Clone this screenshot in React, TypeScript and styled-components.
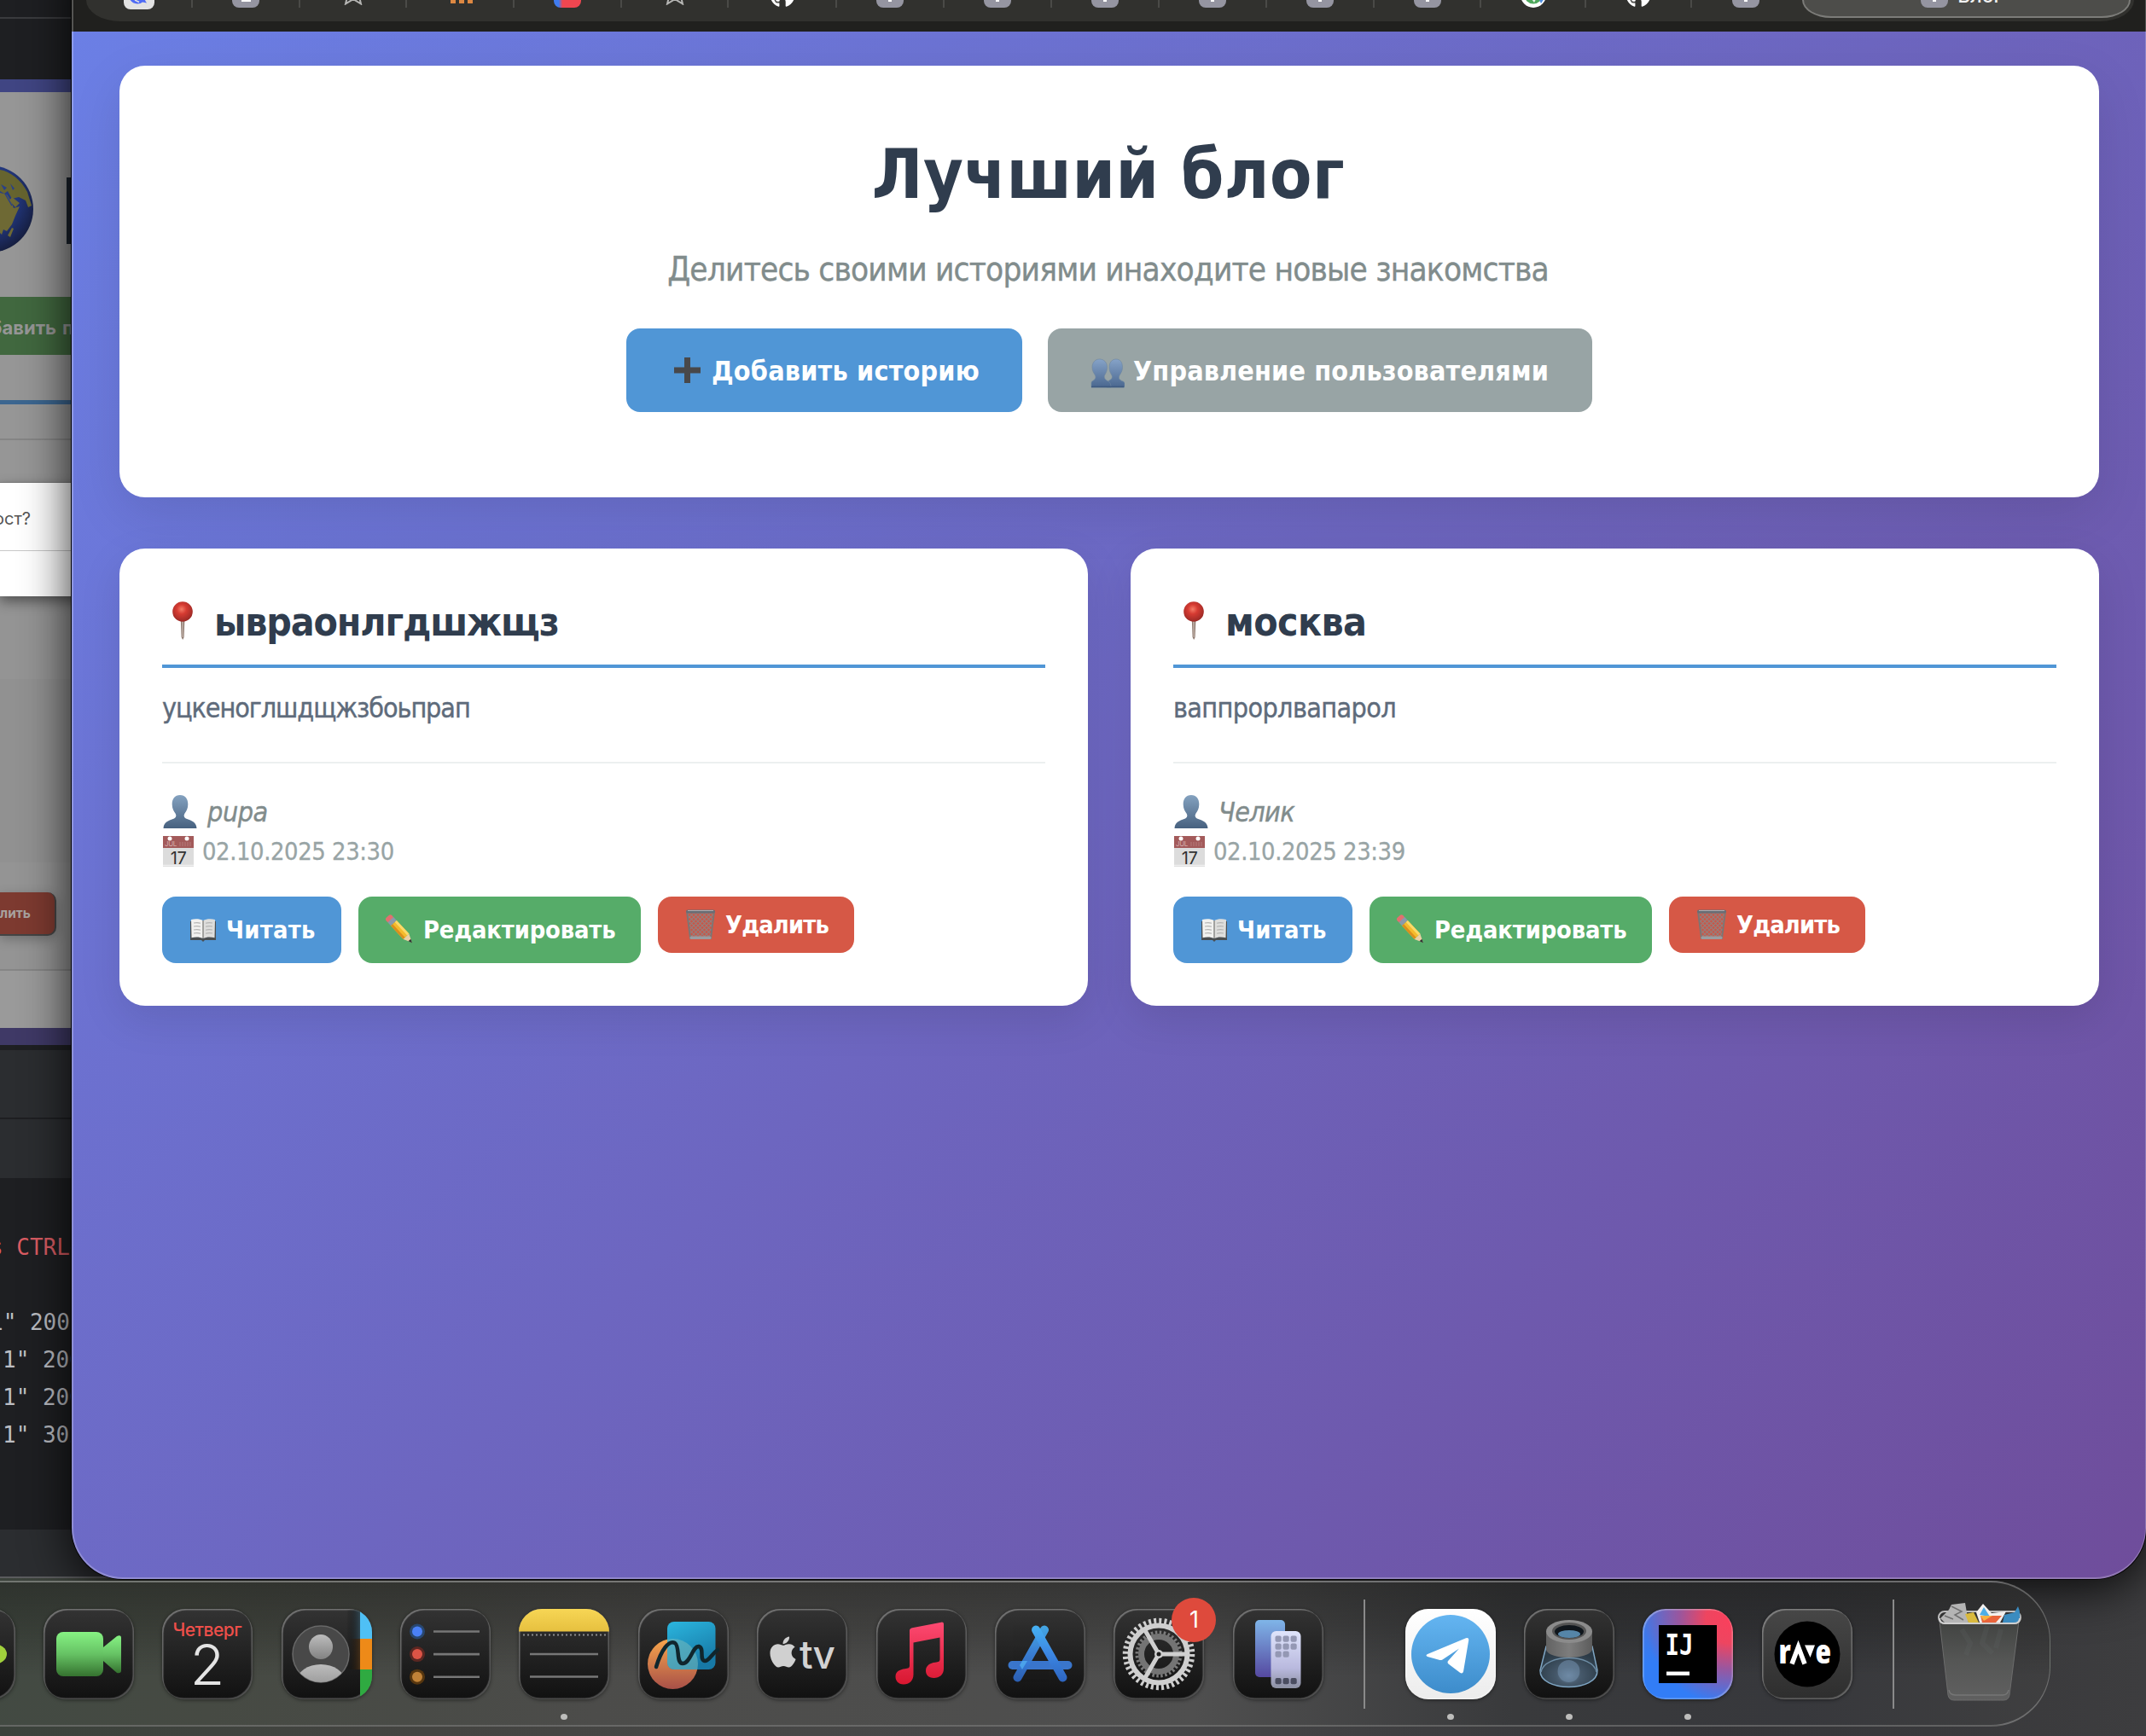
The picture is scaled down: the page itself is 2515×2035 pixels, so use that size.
import React from "react";
import styled, { createGlobalStyle } from "styled-components";
import { FaApple, FaGithub } from "react-icons/fa";

const GlobalStyle = createGlobalStyle`
  * { box-sizing: border-box; }
  html, body { margin: 0; padding: 0; overflow: hidden; background: #2a2a2b; }
  body { font-family: "DejaVu Sans Condensed", "DejaVu Sans", sans-serif; font-stretch: condensed; }
  svg { display: block; flex: none; }
`;

/* ---------- desktop ---------- */

const Desktop = styled.div`
  position: relative;
  width: 2515px;
  height: 2035px;
  overflow: hidden;
  background: linear-gradient(90deg, #3b423b 0%, #444441 20%, #49494a 50%, #353538 80%, #3d3d3f 100%);
`;

const BackWindow = styled.div`
  position: absolute;
  left: 0;
  top: 0;
  width: 140px;
  height: 1850px;
  display: flex;
  flex-direction: column;
  background: #1e1f22;
  border-bottom: 2px solid #5a5b5d;
  overflow: hidden;
`;

const Band = styled.div<{ $h: number; $bg: string; $line?: string }>`
  flex: none;
  height: ${(p) => p.$h}px;
  background: ${(p) => p.$bg};
  border-bottom: ${(p) => (p.$line ? `2px solid ${p.$line}` : "none")};
`;

const GlobeBand = styled(Band)`
  display: flex;
  align-items: flex-start;
  padding-top: 86px;
`;

const LetterEdge = styled.div`
  width: 30px;
  height: 78px;
  margin: 14px 0 0 39px;
  background: #1c242e;
`;

const GreenButton = styled(Band)`
  display: flex;
  align-items: center;
  gap: 7px;
  padding-top: 3px;
  color: #969696;
  font: 700 22px/30px Inter, "Open Sans", sans-serif;
`;

const EndAligned = styled.span<{ $w: number }>`
  flex: none;
  display: flex;
  justify-content: flex-end;
  width: ${(p) => p.$w}px;
  white-space: nowrap;
`;

const Dialog = styled.div`
  flex: none;
  position: relative;
  height: 134px;
  background: #fff;
  border-top: 1px solid #777;
  box-shadow: 0 6px 14px rgba(0, 0, 0, 0.45);
`;

const DialogText = styled.div`
  height: 80px;
  padding-top: 28px;
  border-bottom: 1px solid #c8c8c8;
  color: #555;
  font: 400 20px/28px Inter, "Open Sans", sans-serif;
`;

const DeleteBand = styled(Band)`
  padding-top: 35px;
`;

const DimDelete = styled.div`
  display: flex;
  align-items: center;
  width: 66px;
  height: 51px;
  border-radius: 0 10px 10px 0;
  background: #7d3a30;
  border-right: 2px solid #444;
  border-bottom: 2px solid #444;
  color: #a8a29f;
  box-shadow: 0 4px 14px rgba(0, 0, 0, 0.25);
  font: 700 15.5px/20px Inter, "Open Sans", sans-serif;
`;

const Terminal = styled.div`
  flex: none;
  height: 412px;
  padding-top: 59px;
  background: #1e1f22;
`;

const TermLine = styled.div<{ $red?: boolean; $shift: number; $gap?: number }>`
  height: 44px;
  margin-bottom: ${(p) => p.$gap ?? 0}px;
  padding-left: 4px;
  text-indent: ${(p) => p.$shift}px;
  color: ${(p) => (p.$red ? "#db5c63" : "#bcbec4")};
  font: 400 26px/44px "DejaVu Sans Mono", monospace;
  font-stretch: normal;
  white-space: pre;
`;

/* ---------- browser window ---------- */

const Browser = styled.div`
  position: absolute;
  left: 84px;
  top: -90px;
  width: 2431px;
  height: 1941px;
  padding-top: 90px;
  display: flex;
  flex-direction: column;
  overflow: hidden;
  border-radius: 0 0 60px 60px;
  background: #20201e;
  box-shadow: 0 0 0 1px #050505;
  &::after {
    content: "";
    position: absolute;
    inset: 0;
    border: 2px solid rgba(255, 255, 255, 0.24);
    border-right-width: 1px;
    border-radius: 0 0 60px 60px;
  }
`;

const WindowShade = styled.div`
  position: absolute;
  left: 84px;
  top: -100px;
  width: 2431px;
  height: 1951px;
  border-radius: 60px;
  box-shadow: 0 10px 56px rgba(0, 0, 0, 0.85);
`;

const TabStrip = styled.div`
  flex: none;
  display: flex;
  height: 25px;
  margin: 0 14px 12px 17px;
  padding-right: 4px;
  background: #31312e;
  border-radius: 0 0 40px 40px / 0 0 25px 25px;
`;

const Tab = styled.div<{ $w: number; $last?: boolean }>`
  display: flex;
  justify-content: center;
  flex: none;
  width: ${(p) => p.$w}px;
  height: 9px;
  border-right: ${(p) => (p.$last ? "none" : "2px solid #4a4a47")};
`;

const ActiveTab = styled.div`
  flex: 1;
  display: flex;
  justify-content: center;
  gap: 11px;
  height: 21px;
  margin-left: 3px;
  padding-right: 11px;
  background: #4d4d4a;
  border: 2px solid #7c7c79;
  border-top: none;
  border-radius: 0 0 34px 34px / 0 0 21px 21px;
`;

const ActiveTitle = styled.span`
  color: #f2f2f2;
  margin-top: -20px;
  height: 32px;
  font: 500 23px/30px Inter, "Open Sans", sans-serif;
`;

const Favicon = styled.div<{ $bg: string; $w?: number; $h?: number }>`
  display: flex;
  justify-content: center;
  width: ${(p) => p.$w ?? 32}px;
  height: ${(p) => p.$h ?? 9}px;
  border-radius: 0 0 8px 8px;
  background: ${(p) => p.$bg};
  overflow: hidden;
`;

const Notch = styled.div<{ $w: number; $h?: number }>`
  width: ${(p) => p.$w}px;
  height: ${(p) => p.$h ?? 2}px;
  background: #fff;
`;

const RoundIcon = styled.div`
  width: 30px;
  height: 30px;
  margin-top: -21px;
`;

/* ---------- page ---------- */

const Page = styled.main`
  flex: 1;
  padding: 40px 55px 0 56px;
  background: linear-gradient(135deg, #6b7fe5 0%, #6f4d9b 100%);
`;

const Hero = styled.header`
  display: flex;
  flex-direction: column;
  align-items: center;
  height: 506px;
  margin-bottom: 60px;
  padding-top: 78px;
  border-radius: 30px;
  background: #fff;
  box-shadow: 0 20px 60px rgba(0, 0, 0, 0.1);
`;

const Title = styled.h1`
  margin: 0;
  padding-right: 2px;
  color: #303d4e;
  font-size: 80px;
  font-weight: 700;
  line-height: 100px;
  letter-spacing: 0.55px;
`;

const Subtitle = styled.p`
  margin: 31px 0 39px;
  padding-right: 3px;
  color: #818c8c;
  font-size: 38.4px;
  line-height: 60px;
  letter-spacing: -0.81px;
  -webkit-text-stroke: 0.4px currentColor;
`;

const Row = styled.div<{ $gap: number }>`
  display: flex;
  align-items: flex-start;
  gap: ${(p) => p.$gap}px;
`;

const Button = styled.button<{ $bg: string; $w: number; $h: number; $pad: number; $size: number; $track?: number }>`
  display: flex;
  align-items: center;
  gap: ${(p) => (p.$size > 30 ? 10 : 9)}px;
  width: ${(p) => p.$w}px;
  height: ${(p) => p.$h}px;
  margin: 0;
  padding: ${(p) => (p.$size > 30 ? 2 : 0)}px 0 0 ${(p) => p.$pad}px;
  border: none;
  border-radius: 16px;
  background: ${(p) => p.$bg};
  color: #fff;
  font-family: inherit;
  font-stretch: condensed;
  font-size: ${(p) => p.$size}px;
  font-weight: 700;
  letter-spacing: ${(p) => p.$track ?? 0}px;
  white-space: nowrap;
`;

const Grid = styled.section`
  display: grid;
  grid-template-columns: 1fr 1fr;
  gap: 50px;
`;

const Card = styled.article`
  height: 536px;
  padding: 50px;
  border-radius: 30px;
  background: #fff;
  box-shadow: 0 16px 50px rgba(0, 0, 0, 0.1);
`;

const PostTitle = styled.h2<{ $track: number }>`
  display: flex;
  align-items: center;
  gap: 13px;
  height: 90px;
  margin: 0;
  padding-bottom: 14px;
  border-bottom: 4px solid #5096d6;
  color: #303d4e;
  font-size: 46px;
  font-weight: 700;
  letter-spacing: ${(p) => p.$track}px;
`;

const PostText = styled.p<{ $track: number }>`
  height: 112px;
  margin: 0 0 35px;
  padding-top: 22px;
  border-bottom: 2px solid #ecf0f0;
  color: #5e6b7b;
  font-size: 32px;
  line-height: 50px;
  letter-spacing: ${(p) => p.$track}px;
  -webkit-text-stroke: 0.4px currentColor;
`;

const Author = styled.div<{ $track: number }>`
  display: flex;
  align-items: center;
  gap: 11px;
  height: 44px;
  color: #818c8c;
  font-size: 32px;
  font-style: italic;
  line-height: 42px;
  letter-spacing: ${(p) => p.$track}px;
  -webkit-text-stroke: 0.4px currentColor;
`;

const DateRow = styled.div`
  display: flex;
  align-items: center;
  gap: 9px;
  height: 46px;
  margin: 1px 0 30px;
  color: #98a4a5;
  font-size: 28.8px;
  line-height: 46px;
  letter-spacing: -0.4px;
  -webkit-text-stroke: 0.3px currentColor;
`;

/* ---------- dock ---------- */

const DockArea = styled.div`
  position: absolute;
  left: -110px;
  top: 1853px;
  display: flex;
  gap: 33.4px;
  width: 2513px;
  height: 171px;
  padding: 31px 0 0 19.5px;
  border: 2px solid rgba(190, 190, 190, 0.38);
  border-right-width: 1.5px;
  border-radius: 70px;
  background: linear-gradient(180deg, rgba(20, 20, 18, 0.38) 0%, rgba(20, 20, 18, 0.2) 30%, rgba(255, 255, 255, 0.02) 65%),
    linear-gradient(90deg, #3d463e 0%, #42463f 14%, #484846 32%, #4b4b4b 60%, #353638 75%, #333438 88%, #3b3b3c 100%);
`;

const Slot = styled.div`
  position: relative;
  flex: none;
  display: flex;
  flex-direction: column;
  align-items: center;
  width: 106px;
  height: 130px;
`;

const Tile = styled.div<{ $bg?: string }>`
  width: 106px;
  height: 106px;
  flex: none;
  overflow: hidden;
  border-radius: 27px;
  background: ${(p) => p.$bg ?? "linear-gradient(180deg, #333333, #111111)"};
  box-shadow: inset 1.5px 1.5px 1px rgba(255, 255, 255, 0.32), inset -1.5px -1.5px 1px rgba(255, 255, 255, 0.26),
    0 1px 4px rgba(0, 0, 0, 0.45);
`;

const Dot = styled.i`
  width: 8px;
  height: 8px;
  margin-top: 17px;
  border-radius: 50%;
  background: #bdbdbb;
`;

const Divider = styled.div<{ $l: number; $r: number }>`
  flex: none;
  width: 2px;
  height: 128px;
  margin: -11px ${(p) => p.$r}px 0 ${(p) => p.$l}px;
  background: #8a8a8a;
`;

const Badge = styled.span`
  position: absolute;
  right: -14px;
  top: -13px;
  width: 52px;
  height: 52px;
  border-radius: 50%;
  background: #de4a3c;
  color: #fff;
  text-align: center;
  font: 400 27px/52px Inter, "Open Sans", sans-serif;
`;

/* ---------- emoji drawings ---------- */

const Plus = () => (
  <svg width="40" height="40" viewBox="0 0 40 40">
    <path d="M18 4h7v11.500h12v7H25V34h-7V22.500H6v-7h12z" fill="#48484a" />
  </svg>
);

const bust = "M20 1c-6 0-9.500 4.500-9.300 11 .1 5 2 8 3.800 10.500 1.500 2.500 1 5-2 6.300C7 31 1 32 .5 40h39c-.5-8-6.500-9-12-11.200-3-1.300-3.500-3.800-2-6.300C27.300 20 29.200 17 29.300 12 29.500 5.500 26 1 20 1z";

const Person = () => (
  <svg width="42" height="42" viewBox="0 0 42 42">
    <defs>
      <linearGradient id="bust" x1="0" y1="0" x2="0" y2="1">
        <stop offset="0" stopColor="#84a2c0" />
        <stop offset="1" stopColor="#47617f" />
      </linearGradient>
    </defs>
    <path d={bust} fill="url(#bust)" transform="translate(1 0)" />
  </svg>
);

const People = () => (
  <svg width="40" height="40" viewBox="0 -2 40 40">
    <defs>
      <linearGradient id="people" x1="0" y1="0" x2="0" y2="1">
        <stop offset="0" stopColor="#86a3c8" />
        <stop offset="1" stopColor="#4a678f" />
      </linearGradient>
    </defs>
    <g fill="url(#people)" stroke="#6d86a0" strokeWidth=".6">
      <path d="M30 4c-5 0-8 4-8 9.500 0 4.500 1.500 7 3 9.500 1 2.500 0 4.500-3 6-2 1-3 3-3 8h21v-5c-.500-2-3-2-5-3.500-2-1.500-2-3-1-5.500 1.500-2.500 3.500-5 3.500-9.500C37.500 8 35 4 30 4z" />
      <path d="M10.500 4c-5 0-8.500 4-8.500 9.500 0 4.500 2 7 3.500 9.500 1 2.500.5 4-1.500 5.500S1 30 1 32v5h23c0-4-1-6-4-7.500-3-1.500-4.500-4-3.500-6.500 1.500-2.500 3-5 3-9.500C19.500 8 16 4 10.500 4z" />
    </g>
    <path d="M1 36.500h38" stroke="#3f5a80" strokeWidth="1.500" />
  </svg>
);

const Pin = () => (
  <svg width="48" height="48" viewBox="1 0 48 48">
    <defs>
      <radialGradient id="pin" cx=".45" cy=".38" r=".6">
        <stop offset="0" stopColor="#f47b66" />
        <stop offset=".4" stopColor="#d63b32" />
        <stop offset="1" stopColor="#9d2a26" />
      </radialGradient>
    </defs>
    <path d="M22.800 21h4.600l-.8 21-1.500 3-1.500-3z" fill="#8f7a70" />
    <path d="M24.300 23h1.300v19h-1z" fill="#cdbfb6" />
    <circle cx="25" cy="12" r="11.800" fill="url(#pin)" />
  </svg>
);

const CalendarEmoji = () => (
  <svg width="38" height="38" viewBox="0 0 38 38">
    <path d="M1 1h36v36H1z" fill="#dcdcdc" />
    <path d="M1 1h36v14H1z" fill="#a35a5a" />
    <circle cx="9" cy="4" r="2.500" fill="#fff" />
    <circle cx="29" cy="4" r="2.500" fill="#fff" />
    <text x="3" y="13" fontSize="8" fill="#d3aaaa" fontFamily="Inter, sans-serif" strokeWidth="0">JUL</text>
    <path d="M21 8v5m3-5v5m3-5v5m3-5v5m3-5v5" stroke="#b57c7c" strokeWidth="1" />
    <text x="19" y="33.500" fontSize="20" textAnchor="middle" fill="#333" fontFamily="Inter, sans-serif" letterSpacing="-.5" strokeWidth="0">17</text>
    <path d="M1 35.500h36" stroke="#efefef" strokeWidth="1.500" />
  </svg>
);

const Book = () => (
  <svg width="35" height="36" viewBox="1 0 35 36">
    <path d="M3 8h30v22H20l-2 2-2-2H3z" fill="#4a4e50" />
    <path d="M4 6c5-1.500 10-1 14 1v21c-4-2-9-2-13.500-.8z" fill="#f1f1ef" />
    <path d="M32 6c-5-1.500-10-1-14 1v21c4-2 9-2 13.500-.8z" fill="#dededc" />
    <path d="M7 10c3-.6 6-.4 8 .3M7 14c3-.6 6-.4 8 .3M7 18c3-.6 6-.4 8 .3M7 22c3-.6 6-.4 8 .3M29 10c-3-.6-6-.4-8 .3M29 14c-3-.6-6-.4-8 .3M29 18c-3-.6-6-.4-8 .3M29 22c-3-.6-6-.4-8 .3" stroke="#b4b4b2" strokeWidth="1.200" fill="none" />
    <path d="M18 7v21" stroke="#8b8b89" strokeWidth="1.500" />
  </svg>
);

const Pencil = () => (
  <svg width="36" height="36" viewBox="0 0 36 36">
    <g transform="translate(1 0) rotate(47 3 3) scale(.97)">
      <rect x="2" y="-1.500" width="7" height="9.500" rx="3" fill="#e2706f" />
      <rect x="7.500" y="-1.500" width="5.500" height="9.500" fill="#8a99ab" />
      <rect x="13" y="-1.500" width="22" height="9.500" fill="#f5bb2c" />
      <rect x="13" y="-1.500" width="22" height="3" fill="#fbd96a" />
      <rect x="13" y="5" width="22" height="3" fill="#d98f1e" />
      <path d="M35-1.500 45 3.250 35 8z" fill="#ecd0a4" />
      <path d="M41 1.200 45.500 3.250 41 5.300z" fill="#333" />
    </g>
  </svg>
);

const Basket = () => (
  <svg width="37" height="38" viewBox="1 0 37 38">
    <defs>
      <pattern id="mesh" width="5" height="5" patternUnits="userSpaceOnUse">
        <path d="M0 0l5 5M5 0 0 5" stroke="#94807d" strokeWidth="1.100" />
      </pattern>
    </defs>
    <path d="M2 4h32l-4 31H6z" fill="#c95647" />
    <path d="M2 4h32l-4 31H6z" fill="url(#mesh)" stroke="#7a7675" strokeWidth="1.800" />
    <rect x="1" y="1.500" width="34" height="4" rx="2" fill="#686d74" />
    <path d="M3 2.500h30" stroke="#a9adb2" strokeWidth="1" />
    <rect x="5.500" y="32.500" width="25" height="3.500" rx="1.500" fill="#9a9da1" />
  </svg>
);

const Globe = () => (
  <svg width="39" height="102" viewBox="0 0 39 102">
    <defs>
      <radialGradient id="sea" gradientUnits="userSpaceOnUse" cx="-22" cy="36" r="78">
        <stop offset="0" stopColor="#2d4a9a" />
        <stop offset=".55" stopColor="#22367a" />
        <stop offset="1" stopColor="#12162c" />
      </radialGradient>
    </defs>
    <circle cx="-12" cy="51" r="51" fill="url(#sea)" />
    <path d="M0 5c12 2 25 12 32 26l5 16-4 2-3-8-8-4-8 2-5-9-4 3-5-3z" fill="#66642f" />
    <path d="M0 32l8 2 5 8 3 8 7-2-5 11-4 10-6 8-4-2-2 6-2-2z" fill="#6e6934" />
    <path d="M11 41l3-4 9 7-5 5z" fill="#6e6934" />
    <path d="M9 82l5-9 2 1-4 10z" fill="#6e6934" />
    <path d="M1 22l7 4-3 3zM12 21l5 6-2 2z" fill="#2a4188" />
    <path d="M6 33l8 14" stroke="#2a4188" strokeWidth="1.500" />
  </svg>
);

/* ---------- dock icons ---------- */

const Art = ({ children }: { children: React.ReactNode }) => (
  <svg width="106" height="106" viewBox="0 0 106 106">{children}</svg>
);

const MessagesPeek = () => (
  <Art><ellipse cx="80" cy="53" rx="16" ry="12" fill="#a0d03c" /></Art>
);

const FaceTime = () => (
  <Art>
    <defs>
      <linearGradient id="ft" x1="0" y1="0" x2="0" y2="1">
        <stop offset="0" stopColor="#86f283" />
        <stop offset=".5" stopColor="#66c264" />
        <stop offset="1" stopColor="#35722f" />
      </linearGradient>
    </defs>
    <rect x="15" y="27" width="55" height="52" rx="8" fill="url(#ft)" />
    <path d="M70 45 86 32q5-2 5 2v38q0 4-5 3L70 61z" fill="url(#ft)" />
  </Art>
);

const CalendarApp = () => (
  <Art>
    <text x="53" y="31.500" textAnchor="middle" fontSize="21" fontWeight="500" fill="#ee4f4a" fontFamily="Inter, Roboto, sans-serif" textLength="81">Четверг</text>
    <text x="53" y="88.500" textAnchor="middle" fontSize="66" fontWeight="300" fill="#e4e4e4" fontFamily="Inter, Roboto, sans-serif">2</text>
  </Art>
);

const Contacts = () => (
  <Art>
    <defs>
      <linearGradient id="cg" x1="0" y1="0" x2="0" y2="1">
        <stop offset="0" stopColor="#bdbdbd" />
        <stop offset="1" stopColor="#828282" />
      </linearGradient>
      <linearGradient id="cs" x1="0" y1="0" x2="1" y2="0">
        <stop offset="0" stopColor="#000" stopOpacity="0" />
        <stop offset="1" stopColor="#2f4a58" stopOpacity=".8" />
      </linearGradient>
      <linearGradient id="cw" x1="0" y1="0" x2="1" y2="0">
        <stop offset="0" stopColor="#000" stopOpacity="0" />
        <stop offset="1" stopColor="#4a3015" stopOpacity=".8" />
      </linearGradient>
      <clipPath id="cc"><circle cx="46" cy="53" r="33" /></clipPath>
    </defs>
    <rect x="76" y="1" width="16" height="34" fill="url(#cs)" />
    <rect x="76" y="35" width="16" height="36" fill="url(#cw)" />
    <rect x="92" y="0" width="14" height="35" fill="#4fc0f5" />
    <rect x="92" y="35" width="14" height="36" fill="#ee8a18" />
    <rect x="92" y="71" width="14" height="35" fill="#2faa41" />
    <circle cx="46" cy="53" r="33" fill="#484848" stroke="#686868" strokeWidth="1.500" />
    <ellipse cx="46" cy="44.500" rx="14" ry="14.500" fill="url(#cg)" />
    <ellipse cx="46" cy="85" rx="28" ry="20" fill="url(#cg)" clipPath="url(#cc)" />
  </Art>
);

const Reminders = () => (
  <Art>
    {[["#4a80f6", "#28476f"], ["#dc5446", "#5c2722"], ["#c08238", "#56360f"]].map(([c, o], i) => (
      <g key={c}>
        <circle cx="20" cy={26.500 + i * 26.600} r="9" fill={o} />
        <circle cx="20" cy={26.500 + i * 26.600} r="6" fill={c} />
        <path d={`M39 ${26.500 + i * 26.600}h54`} stroke="#777" strokeWidth="2.600" />
      </g>
    ))}
  </Art>
);

const Notes = () => (
  <Art>
    <defs>
      <linearGradient id="ng" x1="0" y1="0" x2="0" y2="1">
        <stop offset="0" stopColor="#f7d655" />
        <stop offset="1" stopColor="#e6c03f" />
      </linearGradient>
    </defs>
    <rect width="106" height="26.500" fill="url(#ng)" />
    <path d="M5 30.500h98" stroke="#8c8c8c" strokeWidth="2" strokeDasharray="2 3" />
    <path d="M13 53h80M13 79.500h80" stroke="#777" strokeWidth="2.600" />
  </Art>
);

const Freeform = () => (
  <Art>
    <defs>
      <linearGradient id="fb" x1="0" y1="0" x2=".4" y2="1">
        <stop offset="0" stopColor="#2bb6df" />
        <stop offset="1" stopColor="#1779a6" />
      </linearGradient>
      <linearGradient id="fo" x1="0" y1="0" x2="0" y2="1">
        <stop offset="0" stopColor="#f8a64c" />
        <stop offset="1" stopColor="#a85048" />
      </linearGradient>
      <clipPath id="fc"><circle cx="40.500" cy="64.500" r="29.500" /></clipPath>
    </defs>
    <circle cx="40.500" cy="64.500" r="29.500" fill="url(#fo)" />
    <rect x="34" y="15" width="56.500" height="56" rx="8" fill="url(#fb)" />
    <rect x="34" y="15" width="56.500" height="56" rx="8" fill="#6fb7bd" opacity=".6" clipPath="url(#fc)" />
    <path d="M21 68C27 48 36 36 43 40c6 4 1 24 9 24 9 0 12-21 19-20 7 2 0 16 7 17 5 0 8-8 15-13" fill="none" stroke="#10262d" strokeWidth="4.500" strokeLinecap="round" />
  </Art>
);

const AppleTv = () => (
  <Art>
    <g fill="#d2d2d2">
      <FaApple x="10" y="30" size={41} color="#d0d0d0" />
      <text x="50" y="70" fontSize="46" fontWeight="500" letterSpacing="-1" fontFamily="Inter, sans-serif" textLength="41" lengthAdjust="spacingAndGlyphs">tv</text>
    </g>
  </Art>
);

const Music = () => (
  <Art>
    <defs>
      <linearGradient id="mg" x1="0" y1="0" x2="0" y2="1">
        <stop offset="0" stopColor="#fd4a72" />
        <stop offset="1" stopColor="#d81730" />
      </linearGradient>
    </defs>
    <path d="M39 25.500q0-2.500 3-3.200L76 15.700q3-.5 3 2V70c0 7-5 11-11.500 11S58 77 58 72.500c0-6 5-9 11-9.700 4-.5 5.500-1 5.500-4V33.500L43.500 39.500V77c0 7-5 11.500-11.500 11.500S22.500 84 22.500 79.500c0-6 5-8.500 11-9.200 4-.5 5.500-1 5.500-4z" fill="url(#mg)" />
  </Art>
);

const AppStore = () => (
  <Art>
    <defs>
      <linearGradient id="as" gradientUnits="userSpaceOnUse" x1="0" y1="18" x2="0" y2="88">
        <stop offset="0" stopColor="#48b4f4" />
        <stop offset=".5" stopColor="#3c86e2" />
        <stop offset="1" stopColor="#2c62bd" />
      </linearGradient>
    </defs>
    <path d="M20.500 66h65" stroke="#3a76cc" strokeWidth="10" strokeLinecap="round" />
    <path d="M48 24.500 79.500 80.500" stroke="url(#as)" strokeWidth="10" strokeLinecap="round" />
    <path d="M58 24.500 26.500 80.500" stroke="url(#as)" strokeWidth="10" strokeLinecap="round" opacity=".92" />
    <path d="M32 71l3-5 3-5h-6l-3 5z" fill="#54b4f4" opacity=".7" />
  </Art>
);

const Settings = () => (
  <Art>
    <circle cx="53" cy="53" r="39" fill="none" stroke="#cfcfcf" strokeWidth="6.500" strokeDasharray="3 3.126" />
    <circle cx="53" cy="53" r="33.500" fill="none" stroke="#cfcfcf" strokeWidth="6" />
    <circle cx="53" cy="53" r="25.500" fill="none" stroke="#7c7c7c" strokeWidth="4" strokeDasharray="2.500 2.506" />
    <circle cx="53" cy="53" r="20.500" fill="none" stroke="#747474" strokeWidth="7" />
    <path d="M53 53h32M53 53 37 25.300M53 53 37 80.700" stroke="#cfcfcf" strokeWidth="5" />
    <circle cx="53" cy="53" r="5" fill="#cfcfcf" />
    <circle cx="53" cy="53" r="2.500" fill="#1c1c1c" />
  </Art>
);

const Mirroring = () => (
  <Art>
    <defs>
      <linearGradient id="mb" x1="0" y1="0" x2="0" y2="1">
        <stop offset="0" stopColor="#7fb5e8" />
        <stop offset="1" stopColor="#5548a0" />
      </linearGradient>
      <linearGradient id="mf" x1="0" y1="0" x2="0" y2="1">
        <stop offset="0" stopColor="#dfe4fb" />
        <stop offset=".65" stopColor="#b9b9de" />
        <stop offset="1" stopColor="#8c90a2" />
      </linearGradient>
    </defs>
    <rect x="26" y="13" width="35" height="67" rx="5" fill="url(#mb)" />
    <rect x="44.500" y="26" width="35" height="67" rx="6" fill="url(#mf)" />
    {[[0, 31.5], [1, 31.5], [2, 31.5], [0, 40.5], [1, 40.5], [2, 40.5], [0, 49.5], [1, 49.5], [0, 81], [1, 81], [2, 81]].map(([c, y]) => (
      <rect key={`${c}-${y}`} x={49.500 + c * 9} y={y} width="7.200" height="7.200" rx="2" fill={y > 80 ? "#4a4d60" : "#9498b4"} />
    ))}
  </Art>
);

const Telegram = () => (
  <Art>
    <defs>
      <linearGradient id="tg" x1="0" y1="0" x2="0" y2="1">
        <stop offset="0" stopColor="#64b5f1" />
        <stop offset="1" stopColor="#3d8ccb" />
      </linearGradient>
    </defs>
    <circle cx="53" cy="53" r="46" fill="url(#tg)" />
    <path d="M26 53 71 34.200q3.500-1 3.200 2.500L68 73.500q-1 3-4 1.300L50.500 64.500q-2-2 0-4L63 46.500 43.500 59.500q-2 1-4 .3L26 56q-3-1.500 0-3z" fill="#fff" />
  </Art>
);

const Loupe = () => (
  <Art>
    <defs>
      <linearGradient id="lb" x1="0" y1="0" x2="1" y2="0">
        <stop offset="0" stopColor="#636363" />
        <stop offset=".5" stopColor="#7d7d7d" />
        <stop offset="1" stopColor="#5c5c5c" />
      </linearGradient>
      <radialGradient id="lg" cx=".5" cy=".72" r=".6">
        <stop offset="0" stopColor="#6d88a2" />
        <stop offset=".35" stopColor="#46596b" />
        <stop offset="1" stopColor="#2b3a46" />
      </radialGradient>
    </defs>
    <path d="M26 44 19 72c-1 26 68 26 67 0L80 44z" fill="url(#lg)" stroke="#7fa6c4" strokeWidth="1.500" />
    <path d="M20 74c4-22 61-22 65 0" fill="none" stroke="#6d8ca4" strokeWidth="1.500" />
    <circle cx="52.500" cy="73" r="13" fill="#6f8ca8" opacity=".6" />
    <path d="M26 26v22c3 12 50 12 54 0V26z" fill="url(#lb)" />
    <ellipse cx="53" cy="26.500" rx="27" ry="13.500" fill="#8b8b8b" />
    <ellipse cx="53" cy="26" rx="20" ry="10" fill="#545454" />
    <ellipse cx="53" cy="26.500" rx="17" ry="7.500" fill="#10161c" />
    <ellipse cx="53" cy="29.500" rx="13" ry="4.500" fill="#5585a8" />
  </Art>
);

const Idea = () => (
  <Art>
    <rect x="19" y="19" width="68" height="68" fill="#000" />
    <text x="26.500" y="53.500" fontSize="34" fontWeight="700" fill="#fff" fontFamily="'DejaVu Sans Mono', monospace" textLength="33" lengthAdjust="spacingAndGlyphs">IJ</text>
    <rect x="28" y="73.500" width="27" height="4.500" fill="#fff" />
  </Art>
);

const Rave = () => (
  <Art>
    <circle cx="53" cy="53" r="38.500" fill="#000" />
    <g fill="#fff" fontFamily="'Open Sans', sans-serif" fontWeight="800" fontSize="38">
      <text x="19.500" y="64">r</text>
      <text x="62.500" y="64">e</text>
    </g>
    <path d="M35 64.500 42.500 44.500 50 64.500" fill="none" stroke="#fff" strokeWidth="5.500" />
    <path d="M50 42.500h12L56.500 57z" fill="#fff" />
  </Art>
);

const Trash = () => (
  <svg width="106" height="114" viewBox="0 0 106 114">
    <defs>
      <linearGradient id="tb" x1="0" y1="0" x2="0" y2="1">
        <stop offset="0" stopColor="#414341" />
        <stop offset=".5" stopColor="#555655" />
        <stop offset="1" stopColor="#606060" />
      </linearGradient>
    </defs>
    <path d="M6 14 16 101q1 6 7 6h58q6 0 7-6l11-87z" fill="url(#tb)" stroke="#6c6c6c" strokeWidth="1" />
    <path d="M17 95q1 6 7 6h56q6 0 7-6" fill="none" stroke="#808080" strokeWidth="1.500" opacity=".7" />
    <path d="M32 24l10 16-5 14M62 20l-6 20 12 12M78 24l-6 22" stroke="#666869" strokeWidth="6" fill="none" opacity=".18" />
    <rect x="5" y="3" width="96" height="14" rx="7" fill="#333" stroke="#bdbdbd" strokeWidth="2" />
    <path d="M7 11 17 1l3-6 16-2 4 23H12z" fill="#b5b5b5" />
    <path d="M20-3l12 6-8 4 10 6M12 8l10 4" stroke="#707070" strokeWidth="1.500" fill="none" />
    <path d="M36 6l10-2 6 12H40z" fill="#d9ba3e" />
    <path d="M57-6 67 5l17-2-7 13H53l-4-12z" fill="#f3f0ee" />
    <path d="M58-2 65 9l-12-2z" fill="#4daee8" />
    <path d="M54 8l25 0-7 8H56z" fill="#e9643b" />
    <path d="M54 8l14 0-10 6z" fill="#f5b245" />
    <path d="M98-3q4 9 1 19H80l2-9 12-3z" fill="#3b8cc0" />
    <path d="M6 11q0 6 7 6h80q7 0 7-6" fill="none" stroke="#cfcfcf" strokeWidth="2" />
  </svg>
);

const TrashSlot = styled(Slot)`
  svg { overflow: visible; }
`;

type DockApp = { name: string; art: React.ReactNode; running?: boolean; bg?: string; badge?: string };

const SYSTEM_APPS: DockApp[] = [
  { name: "messages", art: <MessagesPeek /> },
  { name: "facetime", art: <FaceTime /> },
  { name: "calendar", art: <CalendarApp /> },
  { name: "contacts", art: <Contacts /> },
  { name: "reminders", art: <Reminders /> },
  { name: "notes", art: <Notes />, running: true },
  { name: "freeform", art: <Freeform /> },
  { name: "tv", art: <AppleTv /> },
  { name: "music", art: <Music /> },
  { name: "appstore", art: <AppStore /> },
  { name: "settings", art: <Settings />, badge: "1" },
  { name: "mirroring", art: <Mirroring /> },
];

const OPEN_APPS: DockApp[] = [
  { name: "telegram", art: <Telegram />, running: true, bg: "linear-gradient(180deg, #ffffff, #ececec)" },
  { name: "loupe", art: <Loupe />, running: true },
  {
    name: "idea",
    art: <Idea />,
    running: true,
    bg: "radial-gradient(circle at 96% 12%, #f9405c 0%, #ee4560 20%, rgba(170,80,145,.85) 42%, rgba(50,120,245,0) 72%), linear-gradient(180deg, #4a74dd, #327df6 60%)",
  },
  { name: "rave", art: <Rave />, bg: "linear-gradient(180deg, #474747, #2e2e2e)" },
];

const DockIcon = ({ app }: { app: DockApp }) => (
  <Slot>
    <Tile $bg={app.bg}>{app.art}</Tile>
    {app.running && <Dot />}
    {app.badge && <Badge>{app.badge}</Badge>}
  </Slot>
);

/* ---------- tabs ---------- */

const Letter = () => (
  <Favicon $bg="#9595a1"><Notch $w={4} $h={2} /></Favicon>
);

const Star = () => (
  <svg width="22" height="6" viewBox="0 0 22 6">
    <path d="M4-4 2 4.500 11-1l9 5.500L18-4" fill="none" stroke="#b4b4b2" strokeWidth="2" />
  </svg>
);

const GitHub = () => (
  <RoundIcon><FaGithub size={30} color="#fff" /></RoundIcon>
);

const TABS: { width: number; icon: React.ReactNode }[] = [
  {
    width: 125,
    icon: (
      <Favicon $bg="#e2e2e2" $w={36} $h={11}>
        <svg width="26" height="6" viewBox="0 0 26 6"><path d="M1-4q2 8 10 8.500 4 0 6-2l5 1-2-3 3-3-6-1z" fill="#4f6bf5" /><path d="M8 0l5 2.500" stroke="#e2e2e2" strokeWidth="1.500" /></svg>
      </Favicon>
    ),
  },
  { width: 126, icon: <Favicon $bg="#9595a1"><Notch $w={11} /></Favicon> },
  { width: 125, icon: <Star /> },
  { width: 126, icon: <svg width="30" height="5" viewBox="-4 0 30 5"><path d="M0-2h6v6H0zM10-2h6v6h-6zM20-2h6v6h-6z" fill="#dd8842" /></svg> },
  { width: 126, icon: <Favicon $bg="linear-gradient(90deg, #3f7cf0 18%, #ef4650 32%)" /> },
  { width: 125, icon: <Star /> },
  { width: 127, icon: <GitHub /> },
  { width: 126, icon: <Letter /> },
  { width: 126, icon: <Letter /> },
  { width: 126, icon: <Letter /> },
  { width: 126, icon: <Letter /> },
  { width: 126, icon: <Letter /> },
  { width: 125, icon: <Letter /> },
  { width: 123, icon: <RoundIcon><svg width="30" height="30"><circle cx="15" cy="15" r="15" fill="#fff" /><circle cx="15" cy="15" r="10.500" fill="#4ea85c" /><path d="M22 21l6-2-4 6z" fill="#4d8de0" /><path d="M13 20h5l-2 4z" fill="#e8f4e8" /></svg></RoundIcon> },
  { width: 124, icon: <GitHub /> },
  { width: 126, icon: <Letter /> },
];

/* ---------- posts ---------- */

const POSTS = [
  { title: "ывраонлгдшжщз", titleTrack: -1.15, text: "уцкеноглшдщжзбоьпрап", textTrack: -1.08, author: "pupa", authorTrack: -0.4, date: "02.10.2025 23:30" },
  { title: "москва", titleTrack: -0.6, text: "ваппрорлвапарол", textTrack: -0.62, author: "Челик", authorTrack: -0.6, date: "02.10.2025 23:39" },
];

const Post = ({ post }: { post: (typeof POSTS)[number] }) => (
  <Card>
    <PostTitle $track={post.titleTrack}><Pin />{post.title}</PostTitle>
    <PostText $track={post.textTrack}>{post.text}</PostText>
    <Author $track={post.authorTrack}><Person />{post.author}</Author>
    <DateRow><CalendarEmoji />{post.date}</DateRow>
    <Row $gap={20}>
      <Button $bg="#5096d6" $w={210} $h={78} $pad={31} $size={28.8} $track={0.3}><Book />Читать</Button>
      <Button $bg="#56ac69" $w={331} $h={78} $pad={31} $size={28.8} $track={-0.15}><Pencil />Редактировать</Button>
      <Button $bg="#d65846" $w={230} $h={66} $pad={33} $size={28.8} $track={-0.85}><Basket />Удалить</Button>
    </Row>
  </Card>
);

export default function App() {
  return (
    <Desktop>
      <GlobalStyle />
      <BackWindow>
        <Band $h={22} $bg="#1e1f22" $line="#3a3b3e" />
        <Band $h={71} $bg="#1e1f22" />
        <Band $h={15} $bg="#404583" />
        <GlobeBand $h={240} $bg="#969696"><Globe /><LetterEdge /></GlobeBand>
        <GreenButton $h={68} $bg="#41683f"><EndAligned $w={66}>Добавить</EndAligned>пост</GreenButton>
        <Band $h={53} $bg="#969696" />
        <Band $h={5} $bg="#3c6690" />
        <Band $h={42} $bg="#969696" $line="#858585" />
        <Band $h={49} $bg="#969696" />
        <Dialog><DialogText><EndAligned $w={36}>пост?</EndAligned></DialogText></Dialog>
        <Band $h={97} $bg="#949494" />
        <Band $h={215} $bg="#919191" />
        <DeleteBand $h={127} $bg="#949494" $line="#858585">
          <DimDelete><EndAligned $w={36}>Удалить</EndAligned></DimDelete>
        </DeleteBand>
        <Band $h={67} $bg="#9a9a9a" />
        <Band $h={20} $bg="#3f3966" />
        <Band $h={6} $bg="#1e1f22" />
        <Band $h={81} $bg="#2b2d30" $line="#1e1f22" />
        <Band $h={69} $bg="#2b2d30" />
        <Terminal>
          <TermLine $red $shift={-16} $gap={44}>s CTRL+C</TermLine>
          <TermLine $shift={-16}>1" 200 -</TermLine>
          <TermLine $shift={-1}>1" 200</TermLine>
          <TermLine $shift={-1}>1" 200</TermLine>
          <TermLine $shift={-1}>1" 302</TermLine>
        </Terminal>
        <Band $h={56} $bg="#2b2d30" />
      </BackWindow>

      <WindowShade />
      <Browser>
        <TabStrip>
          {TABS.map((t, i) => (
            <Tab key={i} $w={t.width} $last={i === TABS.length - 1}>{t.icon}</Tab>
          ))}
          <ActiveTab>
            <Letter />
            <ActiveTitle>Блог</ActiveTitle>
          </ActiveTab>
        </TabStrip>
        <Page>
          <Hero>
            <Title>Лучший блог</Title>
            <Subtitle>Делитесь своими историями инаходите новые знакомства</Subtitle>
            <Row $gap={30}>
              <Button $bg="#5096d6" $w={464} $h={98} $pad={50} $size={32} $track={0.2}><Plus />Добавить историю</Button>
              <Button $bg="#98a4a5" $w={638} $h={98} $pad={50} $size={32} $track={0.15}><People />Управление пользователями</Button>
            </Row>
          </Hero>
          <Grid>
            {POSTS.map((p) => <Post key={p.author} post={p} />)}
          </Grid>
        </Page>
      </Browser>

      <DockArea>
        {SYSTEM_APPS.map((a) => <DockIcon key={a.name} app={a} />)}
        <Divider $l={14} $r={13} />
        {OPEN_APPS.map((a) => <DockIcon key={a.name} app={a} />)}
        <Divider $l={14} $r={13} />
        <TrashSlot><Trash /></TrashSlot>
      </DockArea>
    </Desktop>
  );
}
